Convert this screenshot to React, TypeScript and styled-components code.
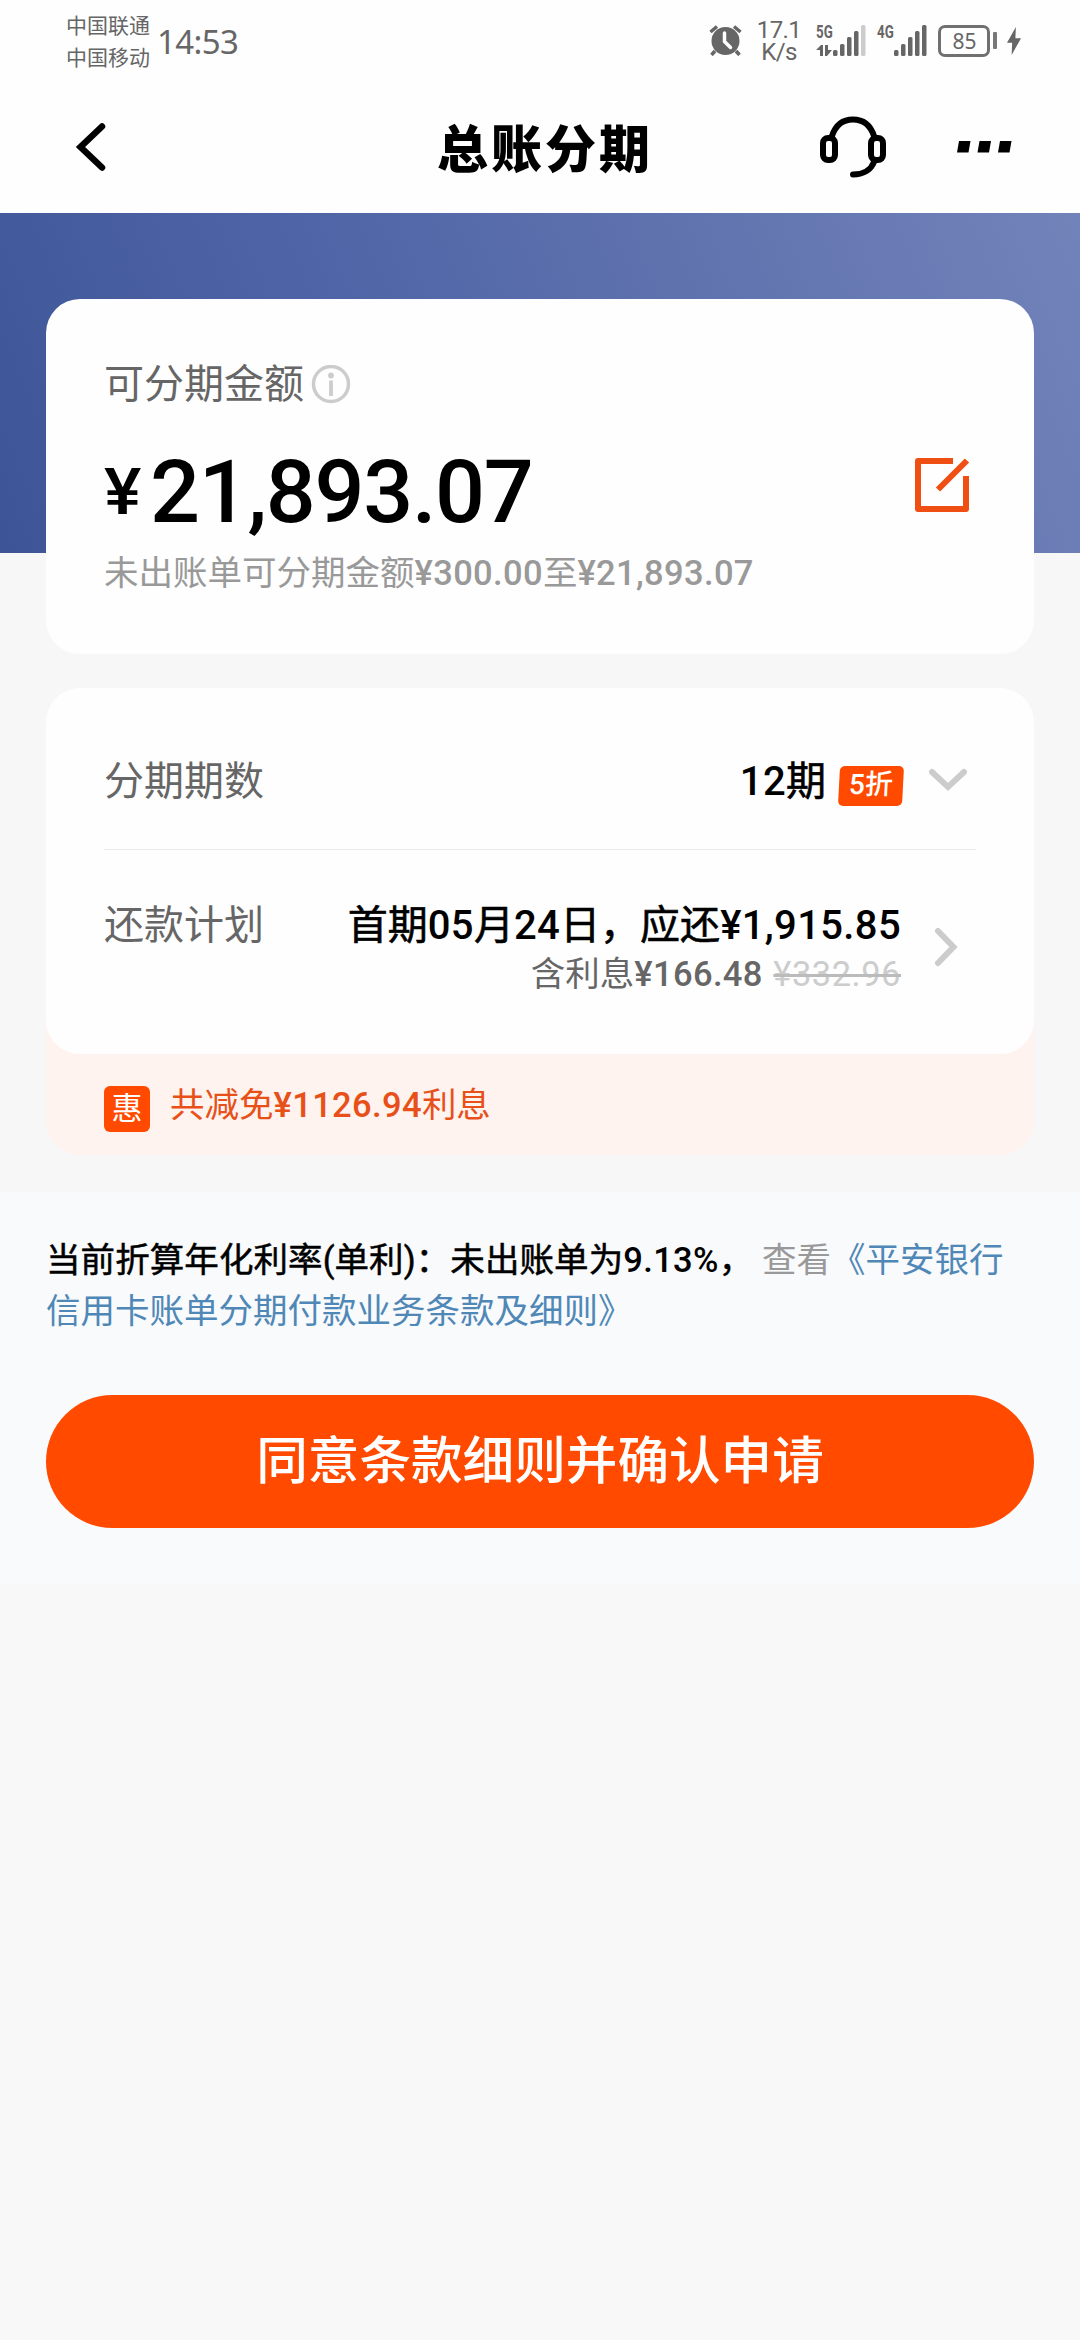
import React from "react";
import styled, { createGlobalStyle } from "styled-components";

const latin = `Roboto, "Noto Sans CJK SC", sans-serif`;

const GlobalStyle = createGlobalStyle`
  * { box-sizing: border-box; }
  body { margin: 0; background: #f8f8f8; font-family: ${latin}; }
`;

const Page = styled.div`
  width: 1080px;
  height: 2340px;
  overflow: hidden;
  display: flex;
  flex-direction: column;
  background: #f8f8f8;
`;

const Top = styled.header`
  height: 213px;
  background: #fefefe;
  flex: none;
`;

const StatusBar = styled.div`
  height: 81px;
  padding: 0 59px 0 66px;
  display: flex;
  justify-content: space-between;
  color: #666;
`;

const StatusLeft = styled.div`
  display: flex;
`;

const Carriers = styled.div`
  padding-top: 8px;
  font-family: "Noto Sans CJK SC", sans-serif;
  font-size: 21px;
  line-height: 32px;
`;

const Clock = styled.div`
  padding: 20px 0 0 7px;
  font-family: "Noto Sans", sans-serif;
  font-size: 33px;
  line-height: 44px;
  letter-spacing: -0.6px;
`;

const StatusRight = styled.div`
  display: flex;
  align-items: flex-start;
`;

const NetSpeed = styled.div`
  width: 48px;
  margin: 20px 0 0 13px;
  text-align: center;
  font-size: 24px;
  line-height: 21.5px;
  letter-spacing: -0.6px;
`;

const Signal = styled.div<{ $gap: number }>`
  display: flex;
  align-items: flex-end;
  height: 31px;
  margin: 25px 0 0 ${(p) => p.$gap}px;
`;

const SignalLabel = styled.div`
  width: 17px;
  height: 31px;
  display: flex;
  flex-direction: column;
  justify-content: space-between;
  font-size: 18.5px;
  font-weight: 700;
  line-height: 14px;
`;

const Squeeze = styled.span`
  transform: scaleX(0.72);
  transform-origin: left;
`;

const Battery = styled.div`
  width: 52px;
  height: 32px;
  margin: 25px 0 0 11px;
  padding: 0 0 1px 1px;
  border: 3px solid #707070;
  border-radius: 7px;
  display: flex;
  align-items: center;
  justify-content: center;
  font-family: "Noto Sans", sans-serif;
  font-size: 21px;
  line-height: 24px;
`;

const BatteryCap = styled.div`
  width: 4px;
  height: 17px;
  margin: 32px 10px 0 3px;
  border-radius: 1px;
  background: #777;
`;

const NavBar = styled.nav`
  height: 131px;
  padding: 0 68px 0 72px;
  display: grid;
  grid-template-columns: 300px 1fr 300px;
  align-items: center;
`;

const Title = styled.h1`
  margin: 0;
  padding-left: 6px;
  text-align: center;
  white-space: nowrap;
  font-family: "Noto Sans CJK SC", sans-serif;
  font-size: 51px;
  font-weight: 900;
  letter-spacing: 3px;
  line-height: 60px;
  height: 62px;
`;

const NavActions = styled.div`
  display: flex;
  justify-content: flex-end;
  align-items: center;
  gap: 71px;
`;

const Content = styled.main`
  padding: 86px 46px 0;
  background: linear-gradient(68deg, #3d5596 0%, #4e64a6 35%, #6577b1 75%, #7283ba 100%) no-repeat 0 0 / 1080px 340px;
  background-color: #f7f7f7;
  height: 979px;
  flex: none;
`;

const Card = styled.section`
  background: #fefefe;
  border-radius: 34px;
`;

const AmountCard = styled(Card)`
  height: 355px;
  padding: 58px 64px 0 58px;
  display: flex;
  justify-content: space-between;
`;

const AmountLabel = styled.div`
  display: flex;
  align-items: center;
  gap: 7px;
  height: 56px;
  color: #666;
  font-size: 40px;
  line-height: 56px;
`;

const Amount = styled.div`
  display: flex;
  align-items: baseline;
  margin-top: 27px;
  height: 104px;
  line-height: 104px;
  font-size: 88px;
  font-weight: 500;
  letter-spacing: -1.3px;
  color: #000;
`;

const Yen = styled.span`
  width: 46px;
  font-size: 64px;
  letter-spacing: 0;
  transform: translateY(-8px) scaleX(1.1);
  transform-origin: left;
`;

const AmountHint = styled.div`
  height: 50px;
  margin-top: 4px;
  color: #999;
  font-size: 34.5px;
  line-height: 50px;
  white-space: nowrap;
`;

const Num = styled.span`
  font-weight: 500;
  letter-spacing: 0.35px;
  -webkit-text-stroke: 0;
`;

const EditButton = styled.div`
  padding-top: 101px;
`;

const PlanWrap = styled.section`
  margin-top: 34px;
  height: 467px;
  background: #fef3ee;
  border-radius: 34px;
`;

const PlanCard = styled(Card)`
  height: 366px;
  padding: 0 58px;
`;

const PlanRow = styled.div<{ $height: number; $top: number }>`
  height: ${(p) => p.$height}px;
  padding-top: ${(p) => p.$top}px;
  display: flex;
  align-items: flex-start;
`;

const Divider = styled.div`
  height: 1px;
  background: #e9e9e9;
`;

const RowLabel = styled.div`
  flex: 1;
  color: #666;
  font-size: 40px;
  line-height: 56px;
`;

const RowValue = styled.div`
  color: #000;
  font-size: 40px;
  line-height: 56px;
  text-align: right;
  white-space: nowrap;
  -webkit-text-stroke: 0.6px #000;
`;

const Discount = styled.span`
  width: 64px;
  height: 40px;
  margin: 12px 0 0 13px;
  border-radius: 5px;
  transform: skewX(-3deg);
  background: #ff4a00;
  color: #fff;
  font-size: 28px;
  font-weight: 500;
  line-height: 37px;
  text-align: center;
`;

const Interest = styled.div`
  color: #666;
  font-size: 34.5px;
  line-height: 40px;
  -webkit-text-stroke: 0;
`;

const OldPrice = styled.s`
  margin-left: 2px;
  color: #ccc;
  letter-spacing: 0.5px;
  text-decoration: line-through;
  text-decoration-thickness: 3px;
  text-decoration-color: #bbb;
`;

const RowArrow = styled.div<{ $top: number; $left: number; $right: number }>`
  display: flex;
  margin: ${(p) => p.$top}px ${(p) => p.$right}px 0 ${(p) => p.$left}px;
`;

const Promo = styled.div`
  height: 101px;
  padding: 32px 58px 0;
  display: flex;
  color: #e8501a;
  font-size: 34.5px;
  line-height: 40px;
`;

const PromoBadge = styled.span`
  width: 46px;
  height: 46px;
  margin-right: 20px;
  border-radius: 6px;
  background: #ff4a00;
  color: #fff;
  font-size: 31px;
  line-height: 45px;
  text-align: center;
`;

const PromoText = styled.span`
  margin-top: -1px;
`;

const Footer = styled.footer`
  height: 392px;
  flex: none;
  padding: 43px 46px 0;
  background: #f9fafc;
`;

const Terms = styled.p`
  margin: 0;
  height: 160px;
  font-size: 34.5px;
  line-height: 50.5px;
  color: #999;
  white-space: nowrap;
`;

const Rate = styled.span`
  color: #000;
  letter-spacing: 0.08px;
  -webkit-text-stroke: 0.5px #000;
`;

const TermsLink = styled.a`
  color: #4f88b7;
`;

const Submit = styled.button`
  display: block;
  width: 988px;
  height: 133px;
  padding: 0;
  border: 0;
  border-radius: 67px;
  background: #ff4a00;
  color: #fff;
  font-family: ${latin};
  font-size: 51.6px;
  font-weight: 500;
  line-height: 130px;
`;

const AlarmSvg = styled.svg`
  margin-top: 24px;
`;

const BoltSvg = styled.svg`
  margin-top: 26px;
`;

const AlarmIcon = () => (
  <AlarmSvg width="33" height="32" viewBox="0 0 33 32">
    <circle cx="16.500" cy="17" r="14" fill="#666" />
    <path d="M1.500 8 L8 2.500 M31.500 8 L25 2.500" stroke="#666" strokeWidth="3.500" fill="none" />
    <path d="M6 27 L2.500 31 M27 27 L30.500 31" stroke="#666" strokeWidth="3.500" />
    <path d="M15.500 9 V17.500 L21.500 23.500" stroke="#fefefe" strokeWidth="3.500" fill="none" strokeLinecap="round" />
  </AlarmSvg>
);

const Bars = ({ weak = false }: { weak?: boolean }) => (
  <svg width="33" height="31" viewBox="0 0 33 31">
    {[6, 12, 19, 25, 31].map((h, i) => (
      <rect key={h} x={i * 7} y={31 - h} width="4.500" height={h} rx="1.500" fill={weak && i === 4 ? "#ccc" : "#666"} />
    ))}
  </svg>
);

const DataArrows = () => (
  <svg width="17" height="11" viewBox="0 0 17 11">
    <path d="M0 5 L5 0 H7 V11 H4 V5 Z M9 0 H12 V5 H16 L11 11 H9 Z" fill="#666" />
  </svg>
);

const Bolt = () => (
  <BoltSvg width="14" height="30" viewBox="0 0 15 30">
    <path d="M9.500 0 L0 17 H5.500 L5 30 L15 12 H9 Z" fill="#666" />
  </BoltSvg>
);

const BackIcon = () => (
  <svg width="36" height="52" viewBox="0 0 36 52">
    <path d="M30 5.500 L8.500 26 L30 46.500" fill="none" stroke="#000" strokeWidth="6.500" strokeLinecap="round" />
  </svg>
);

const HeadsetIcon = () => (
  <svg width="66" height="62" viewBox="0 0 66 62">
    <g fill="none" stroke="#000" strokeWidth="6" strokeLinecap="round">
      <path d="M12 20 C16 8 24 3.500 33 3.500 C42 3.500 50 8 54 20" />
      <rect x="3" y="22" width="12" height="22" rx="5" />
      <rect x="51" y="22" width="12" height="22" rx="5" />
      <path d="M54 46 C51 54 43 58.500 33 58.500" />
    </g>
  </svg>
);

const MoreIcon = () => (
  <svg width="55" height="12" viewBox="0 0 55 12">
    <path d="M2 0 H13.500 L11.500 11.500 H0 Z M22.500 0 H34 L32 11.500 H20.500 Z M43 0 H54.500 L52.500 11.500 H41 Z" />
  </svg>
);

const InfoIcon = () => (
  <svg width="40" height="40" viewBox="0 0 40 40">
    <circle cx="20" cy="19" r="17.500" fill="none" stroke="#ccc" strokeWidth="3.500" />
    <circle cx="20" cy="10.500" r="2.900" fill="#ccc" />
    <path d="M20 15.500 V31" stroke="#ccc" strokeWidth="3.800" />
  </svg>
);

const EditIcon = () => (
  <svg width="56" height="56" viewBox="0 0 56 56">
    <g fill="none" stroke="#f04f14" strokeWidth="6" strokeLinejoin="round">
      <path d="M39 3 H4 V51 H52 V18" />
      <path d="M24 31.500 L53 2.500" />
    </g>
  </svg>
);

const Chevron = ({ down = false }: { down?: boolean }) =>
  down ? (
    <svg width="40" height="26" viewBox="0 0 40 26">
      <path d="M4 4 L20 19 L36 4" fill="none" stroke="#ccc" strokeWidth="6" strokeLinecap="round" />
    </svg>
  ) : (
    <svg width="26" height="40" viewBox="0 0 26 40">
      <path d="M4 4 L19.500 20 L4 36" fill="none" stroke="#ccc" strokeWidth="6" strokeLinecap="round" />
    </svg>
  );

export default function App() {
  return (
    <Page>
      <GlobalStyle />
      <Top>
        <StatusBar>
          <StatusLeft>
            <Carriers>
              <div>中国联通</div>
              <div>中国移动</div>
            </Carriers>
            <Clock>14:53</Clock>
          </StatusLeft>
          <StatusRight>
            <AlarmIcon />
            <NetSpeed>
              17.1
              <br />
              K/s
            </NetSpeed>
            <Signal $gap={13}>
              <SignalLabel>
                <Squeeze>5G</Squeeze>
                <DataArrows />
              </SignalLabel>
              <Bars weak />
            </Signal>
            <Signal $gap={11}>
              <SignalLabel>
                <Squeeze>4G</Squeeze>
              </SignalLabel>
              <Bars />
            </Signal>
            <Battery>85</Battery>
            <BatteryCap />
            <Bolt />
          </StatusRight>
        </StatusBar>
        <NavBar>
          <BackIcon />
          <Title>总账分期</Title>
          <NavActions>
            <HeadsetIcon />
            <MoreIcon />
          </NavActions>
        </NavBar>
      </Top>

      <Content>
        <AmountCard>
          <div>
            <AmountLabel>
              可分期金额
              <InfoIcon />
            </AmountLabel>
            <Amount>
              <Yen>¥</Yen>21,893.07
            </Amount>
            <AmountHint>
              未出账单可分期金额<Num>¥300.00</Num>至<Num>¥21,893.07</Num>
            </AmountHint>
          </div>
          <EditButton>
            <EditIcon />
          </EditButton>
        </AmountCard>

        <PlanWrap>
          <PlanCard>
            <PlanRow $height={161} $top={66}>
              <RowLabel>分期期数</RowLabel>
              <RowValue>
                <Num>12</Num>期
              </RowValue>
              <Discount>5折</Discount>
              <RowArrow $top={14} $left={25} $right={8}>
                <Chevron down />
              </RowArrow>
            </PlanRow>
            <Divider />
            <PlanRow $height={204} $top={48}>
              <RowLabel>还款计划</RowLabel>
              <RowValue>
                首期<Num>05</Num>月<Num>24</Num>日，应还<Num>¥1,915.85</Num>
                <Interest>
                  含利息<Num>¥166.48</Num> <OldPrice>¥332.96</OldPrice>
                </Interest>
              </RowValue>
              <RowArrow $top={29} $left={33} $right={16}>
                <Chevron />
              </RowArrow>
            </PlanRow>
          </PlanCard>
          <Promo>
            <PromoBadge>惠</PromoBadge>
            <PromoText>
              共减免<Num>¥1126.94</Num>利息
            </PromoText>
          </Promo>
        </PlanWrap>
      </Content>

      <Footer>
        <Terms>
          <Rate>
            当前折算年化利率(单利)：未出账单为<Num>9.13%</Num>，
          </Rate>{" "}
          查看
          <TermsLink>
            《平安银行
            <br />
            信用卡账单分期付款业务条款及细则》
          </TermsLink>
        </Terms>
        <Submit>同意条款细则并确认申请</Submit>
      </Footer>
    </Page>
  );
}
